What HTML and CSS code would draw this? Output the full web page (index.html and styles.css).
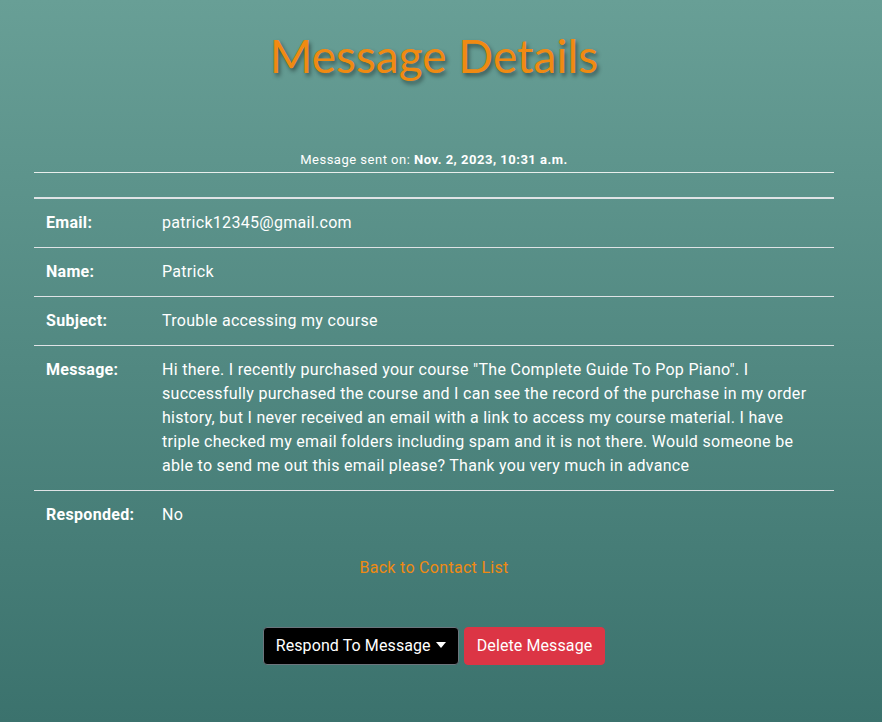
FILE: index.html
```html
<!DOCTYPE html>
<html>
<head>
<meta charset="utf-8">
<title>Message Details</title>
<link rel="stylesheet" href="styles.css">
</head>
<body>
<main class="page">
  <h1 class="title">Message Details</h1>
  <div class="sent">Message sent on: <strong>Nov. 2, 2023, 10:31 a.m.</strong></div>
  <div class="spacer"></div>
  <div class="details">
    <div class="row">
      <div class="label">Email:</div>
      <div class="value">patrick12345@gmail.com</div>
    </div>
    <div class="row">
      <div class="label">Name:</div>
      <div class="value">Patrick</div>
    </div>
    <div class="row">
      <div class="label">Subject:</div>
      <div class="value">Trouble accessing my course</div>
    </div>
    <div class="row">
      <div class="label">Message:</div>
      <div class="value">Hi there. I recently purchased your course "The Complete Guide To Pop Piano". I successfully purchased the course and I can see the record of the purchase in my order history, but I never received an email with a link to access my course material. I have triple checked my email folders including spam and it is not there. Would someone be able to send me out this email please? Thank you very much in advance</div>
    </div>
    <div class="row last">
      <div class="label">Responded:</div>
      <div class="value">No</div>
    </div>
  </div>
  <div class="back"><a href="#" class="back-link">Back to Contact List</a></div>
  <div class="actions">
    <button class="btn btn-respond">Respond To Message<span class="caret"></span></button>
    <button class="btn btn-delete">Delete Message</button>
  </div>
</main>
</body>
</html>
```
FILE: styles.css
```css
html, body {
  margin: 0;
  height: 100%;
}
body {
  background: linear-gradient(180deg, #689f96 0%, #3b726d 100%);
  color: #fff;
  font-family: Roboto, "Liberation Sans", sans-serif;
  font-size: 16px;
  letter-spacing: 0.3px;
  line-height: 24px;
}
.page {
  width: 800px;
  margin-left: 34px;
  padding-top: 28px;
}
.title {
  margin: 0;
  text-align: center;
  font-family: Lato, "Liberation Sans", sans-serif;
  font-weight: 400;
  font-size: 46px;
  line-height: 55px;
  letter-spacing: 0;
  color: #f08a12;
  text-shadow: 2px 3px 4px rgba(0, 0, 0, 0.45);
}
.sent {
  margin-top: 69px;
  text-align: center;
  font-size: 13px;
  line-height: 16px;
  letter-spacing: 0.5px;
  padding-bottom: 4px;
  border-bottom: 1px solid #e9efed;
}
.sent strong {
  font-weight: 700;
}
.spacer {
  height: 24px;
  border-bottom: 2px solid #dfe3e6;
}
.row {
  display: flex;
  border-bottom: 1px solid #dfe3e6;
}
.row.last {
  border-bottom: none;
}
.label {
  flex: 0 0 116px;
  box-sizing: border-box;
  padding: 12px;
  font-weight: 700;
}
.value {
  flex: 1;
  padding: 12px;
}
.back {
  margin-top: 17px;
  text-align: center;
}
.back-link {
  color: #f08a12;
  text-decoration: none;
}
.actions {
  margin-top: 47px;
  display: flex;
  justify-content: center;
  gap: 5px;
}
.btn {
  font-family: Roboto, "Liberation Sans", sans-serif;
  font-size: 16px;
  letter-spacing: 0.1px;
  line-height: 24px;
  color: #fff;
  padding: 6px 12px;
  border-radius: 4px;
  cursor: pointer;
}
.btn-respond {
  background: #000;
  border: 1px solid #6c757d;
}
.btn-delete {
  background: #dc3545;
  border: 1px solid #dc3545;
}
.caret {
  display: inline-block;
  margin-left: 5px;
  vertical-align: 3px;
  border-top: 6px solid #fff;
  border-left: 5px solid transparent;
  border-right: 5px solid transparent;
}
```
